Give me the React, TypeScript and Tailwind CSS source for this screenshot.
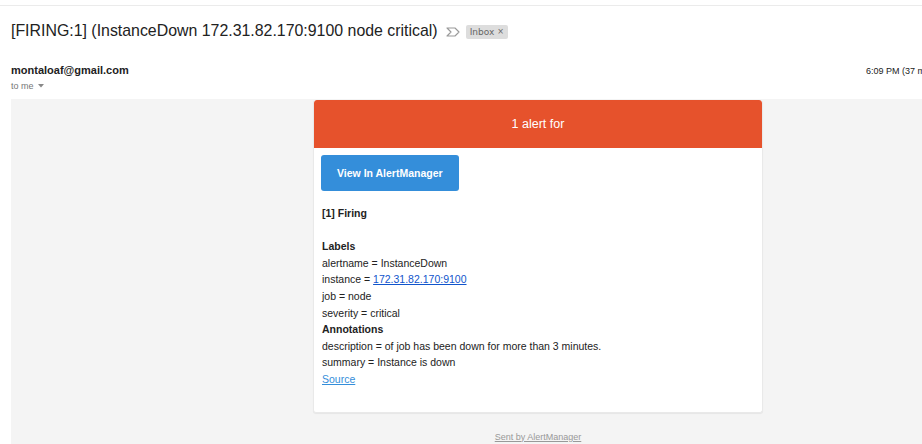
export default function App() {
  return (
    <div className="w-[922px] h-[444px] overflow-hidden bg-white font-['Liberation_Sans',Arial,sans-serif] text-[#222]">
      {/* Top divider */}
      <div className="h-[5px]" />
      <div className="h-px bg-[#ebebeb]" />

      {/* Subject line */}
      <div className="flex items-center pl-[11px] pt-[14px] h-[36px]">
        <h2 className="text-[15.9px] text-[#222] whitespace-nowrap">
          [FIRING:1] (InstanceDown 172.31.82.170:9100 node critical)
        </h2>
        <svg width="14" height="10" viewBox="0 0 14 10" className="ml-[8px] mt-[2px]">
          <path d="M1 1h8l4 4-4 4H1l4-4z" fill="none" stroke="#999" strokeWidth="1.1" strokeLinejoin="round" />
        </svg>
        <span className="ml-[6px] mt-[2px] flex items-center gap-[3px] rounded-[2px] bg-[#dddddd] px-[4px] h-[14px] text-[9px] text-[#666] font-['DejaVu_Sans',sans-serif] leading-none">
          Inbox <span className="text-[8px]">×</span>
        </span>
      </div>

      {/* Sender */}
      <div className="flex justify-between pl-[11px] pt-[21px] h-[57px]">
        <div>
          <div className="text-[11px] font-bold text-[#222] leading-[14px]">montaloaf@gmail.com</div>
          <div className="flex items-center gap-[4px] text-[9px] text-[#777] leading-[12px] mt-[3px]">
            to me
            <svg width="6" height="4" viewBox="0 0 6 4">
              <path d="M0 0h6L3 3.5z" fill="#888" />
            </svg>
          </div>
        </div>
        <div className="w-[56px] overflow-hidden whitespace-nowrap text-[9px] text-[#222] leading-[14px] pt-px">
          6:09 PM (37 m
        </div>
      </div>

      {/* Mail body (wider than the window, clipped on the right) */}
      <div className="ml-[11px] w-[1054px] bg-[#f4f4f4] h-[345px] pt-px">
        <div className="flex flex-col items-center">
          <div className="w-[450px] bg-white rounded-[3px] shadow-[0_1px_1px_rgba(0,0,0,0.06)] border border-[#e9e9e9] border-t-0 overflow-hidden">
            <div className="h-[48px] bg-[#e6522c] rounded-t-[3px] flex items-center justify-center text-white text-[12.5px]">
              1 alert for
            </div>
            <div className="px-[7px] pt-[7px] pb-[24px] text-[10.5px] leading-[16.6px]">
              <a className="inline-flex items-center justify-center h-[36px] px-[16px] rounded-[3px] bg-[#348eda] text-white font-bold text-[10.5px]">
                View In AlertManager
              </a>
              <div className="pl-px pt-[14px]">
                <div className="font-bold">[1] Firing</div>
                <div className="h-[16.6px]" />
                <div className="font-bold">Labels</div>
                <div>alertname = InstanceDown</div>
                <div>
                  instance = <span className="text-[#1155cc] underline">172.31.82.170:9100</span>
                </div>
                <div>job = node</div>
                <div>severity = critical</div>
                <div className="font-bold">Annotations</div>
                <div>description = of job has been down for more than 3 minutes.</div>
                <div>summary = Instance is down</div>
                <div className="text-[#348eda] underline">Source</div>
              </div>
            </div>
          </div>
          <div className="mt-[18px] text-[9px] text-[#999] underline">Sent by AlertManager</div>
        </div>
      </div>
    </div>
  );
}
